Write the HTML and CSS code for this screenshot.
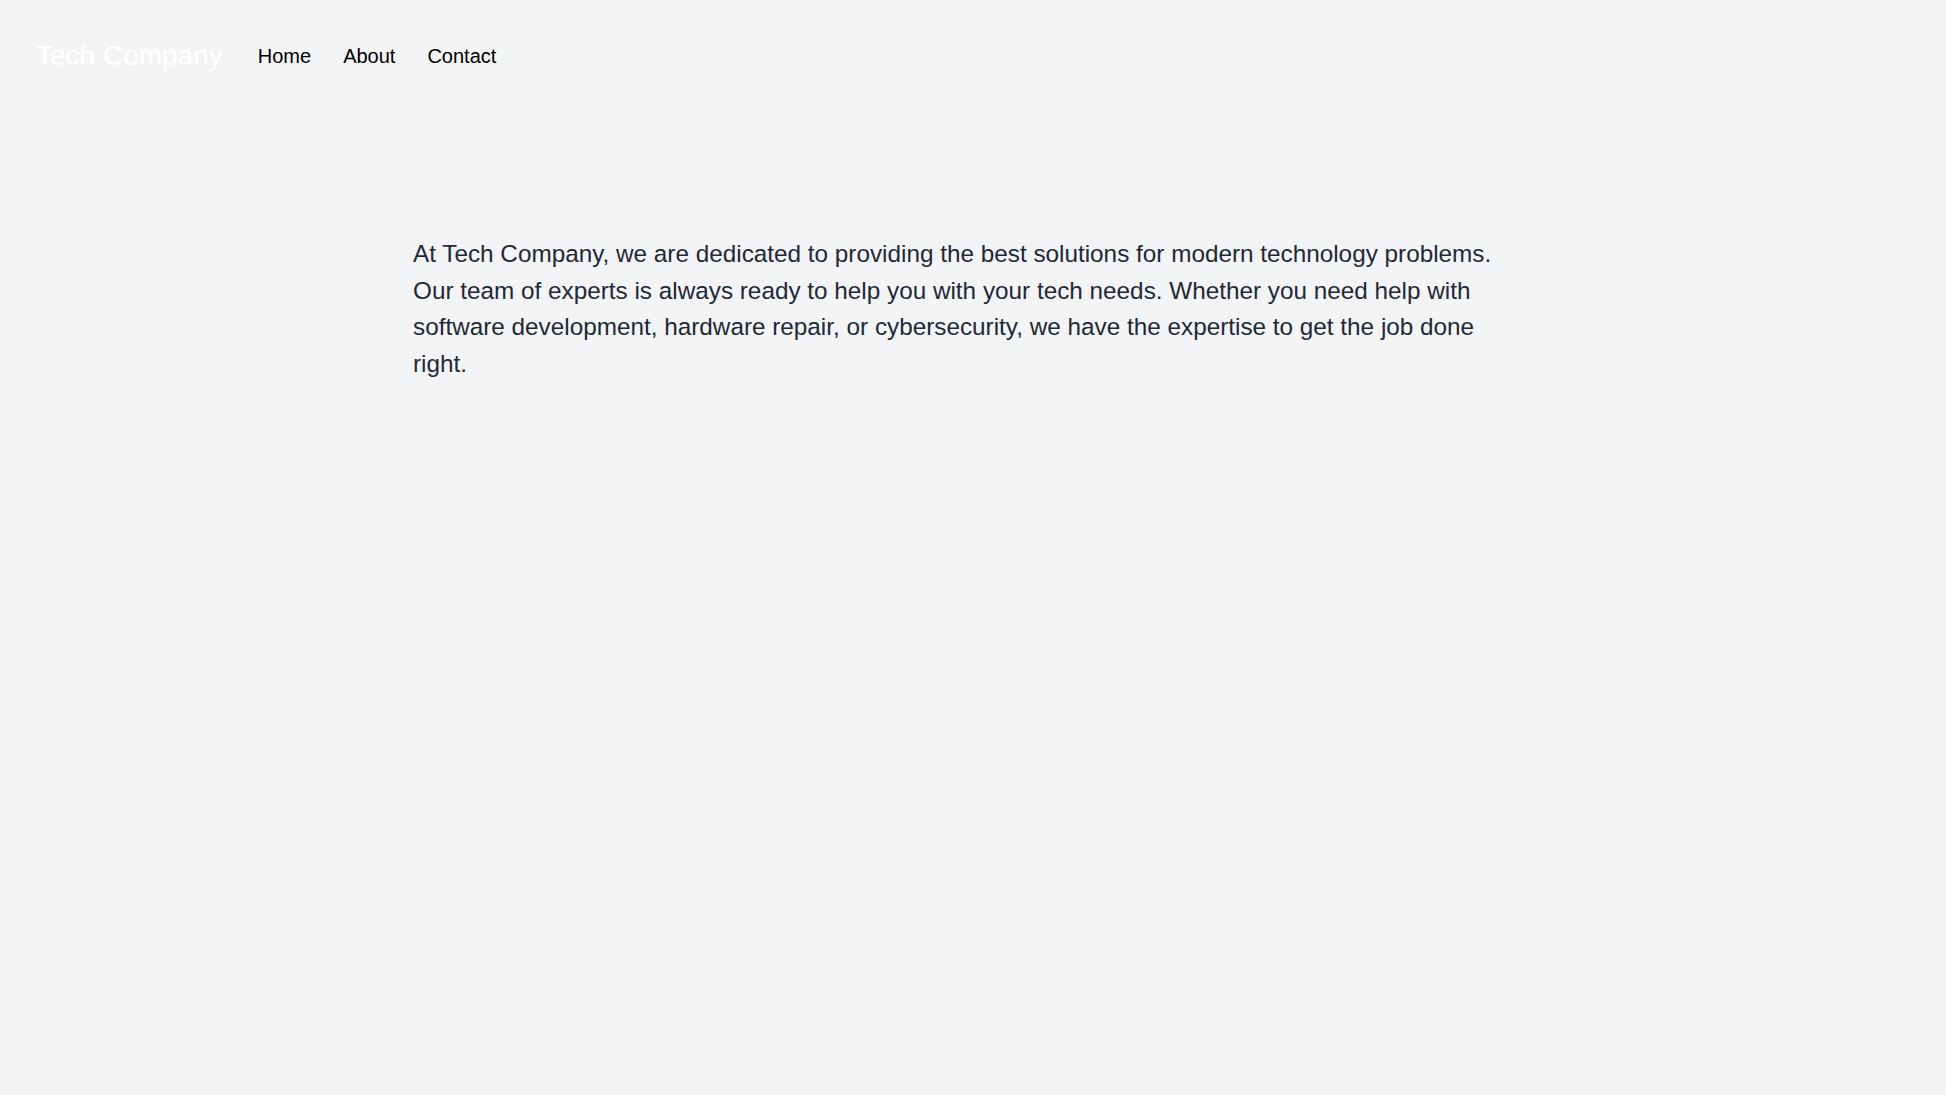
FILE: index.html
```html
<!DOCTYPE html>
<html lang="en">
<head>
<meta charset="utf-8">
<title>Tech Company</title>
<link rel="stylesheet" href="styles.css">
</head>
<body>
<nav class="nav">
  <a class="logo" href="#">Tech Company</a>
  <ul class="links">
    <li><a href="#">Home</a></li>
    <li><a href="#">About</a></li>
    <li><a href="#">Contact</a></li>
  </ul>
</nav>
<main class="main">
  <p class="intro">At Tech Company, we are dedicated to providing the best solutions for modern technology problems. Our team of experts is always ready to help you with your tech needs. Whether you need help with software development, hardware repair, or cybersecurity, we have the expertise to get the job done right.</p>
</main>
</body>
</html>
```

FILE: styles.css
```css
html, body {
  margin: 0;
  padding: 0;
}
body {
  background: #f3f4f6;
  font-family: "Liberation Sans", Arial, sans-serif;
  min-height: 1095px;
}
.nav {
  display: flex;
  align-items: center;
  padding: 36px 36px 34px;
}
.logo {
  color: #ffffff;
  font-size: 28px;
  text-decoration: none;
  line-height: 40px;
}
.links {
  display: flex;
  gap: 32px;
  list-style: none;
  margin: 0 0 0 35px;
  padding: 0;
}
.links a {
  color: #000000;
  font-size: 20px;
  text-decoration: none;
  line-height: 28px;
}
.main {
  max-width: 1120px;
  margin: 0 auto;
  padding: 126px 16px 0;
}
.intro {
  margin: 0;
  color: #1f2937;
  font-size: 24.3px;
  line-height: 36.5px;
}
```
